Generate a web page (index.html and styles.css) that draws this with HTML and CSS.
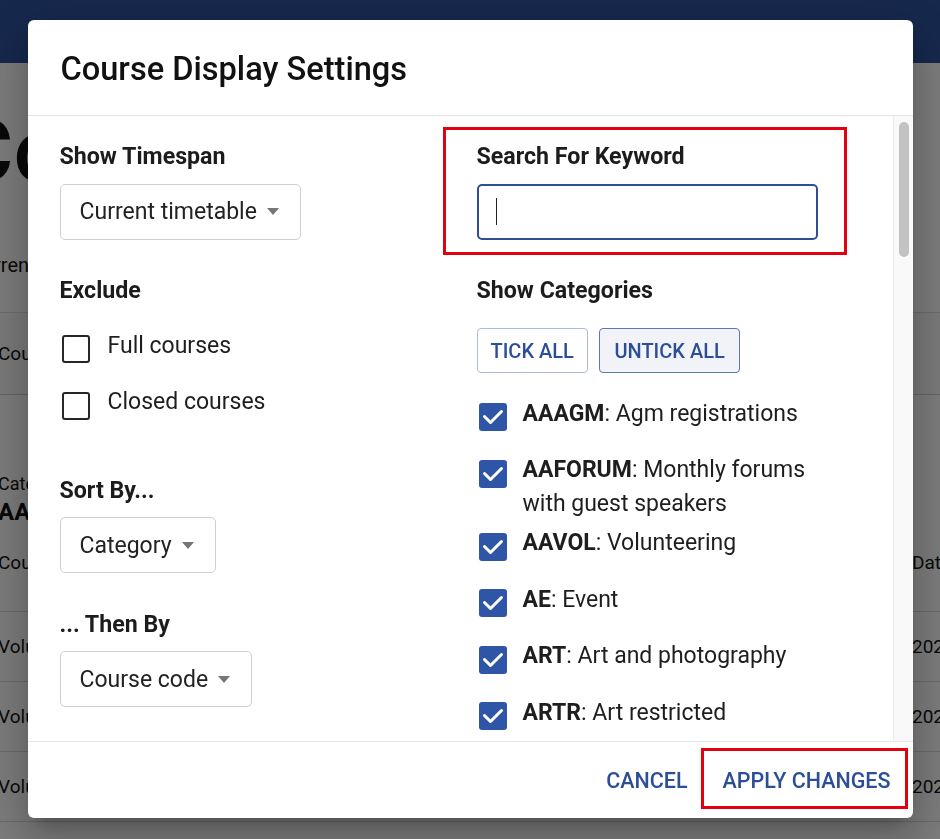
FILE: index.html
```html
<!DOCTYPE html>
<html lang="en">
<head>
<meta charset="utf-8">
<title>Course Display Settings</title>
<link rel="stylesheet" href="styles.css">
</head>
<body>
<div class="page">
  <header class="topbar"></header>
  <main class="content">
    <h1 class="page-title">Courses</h1>
    <p class="page-sub">Current timetable</p>
    <div class="toolbar"><span>Course display settings</span><span class="dots">⋮</span></div>
    <div class="group-label">Category</div>
    <div class="group-name">AAVOL</div>
    <div class="table">
      <div class="thead"><span>Course</span><span>Date</span></div>
      <div class="trow"><span>Volunteer induction</span><span>2024</span></div>
      <div class="trow"><span>Volunteer training</span><span>2024</span></div>
      <div class="trow"><span>Volunteer meeting</span><span>2024</span></div>
    </div>
  </main>
</div>

<div class="overlay">
  <div class="dialog" role="dialog" aria-labelledby="dlg-title">
    <div class="dialog-header">
      <h2 class="dialog-title" id="dlg-title">Course Display Settings</h2>
    </div>

    <div class="dialog-main">
      <div class="dialog-body">
        <div class="col">
          <section class="field">
            <h3 class="field-label">Show Timespan</h3>
            <div class="select"><span>Current timetable</span><span class="caret"></span></div>
          </section>

          <section class="field">
            <h3 class="field-label">Exclude</h3>
            <div class="check-list check-list-exclude">
              <label class="check-row"><span class="box box-empty"></span><span class="check-text check-text-plain">Full courses</span></label>
              <label class="check-row"><span class="box box-empty"></span><span class="check-text check-text-plain">Closed courses</span></label>
            </div>
          </section>

          <section class="field field-sort">
            <h3 class="field-label">Sort By...</h3>
            <div class="select"><span>Category</span><span class="caret"></span></div>
          </section>

          <section class="field field-then">
            <h3 class="field-label">... Then By</h3>
            <div class="select"><span>Course code</span><span class="caret"></span></div>
          </section>
        </div>

        <div class="col">
          <section class="field search-field">
            <h3 class="field-label">Search For Keyword</h3>
            <div class="text-input" role="textbox"><span class="text-caret"></span></div>
            <div class="highlight highlight-search"></div>
          </section>

          <section class="field">
            <h3 class="field-label">Show Categories</h3>
            <div class="btn-row">
              <button class="btn-outline">TICK ALL</button>
              <button class="btn-outline is-active">UNTICK ALL</button>
            </div>
            <div class="check-list check-list-cats">
              <label class="check-row"><span class="box box-checked"><svg viewBox="0 0 28 28"><path d="M5.5 13.5 L11.5 19.5 L22.5 8.5"/></svg></span><span class="check-text"><b>AAAGM</b>: Agm registrations</span></label>
              <label class="check-row"><span class="box box-checked"><svg viewBox="0 0 28 28"><path d="M5.5 13.5 L11.5 19.5 L22.5 8.5"/></svg></span><span class="check-text"><b>AAFORUM</b>: Monthly forums with guest speakers</span></label>
              <label class="check-row"><span class="box box-checked"><svg viewBox="0 0 28 28"><path d="M5.5 13.5 L11.5 19.5 L22.5 8.5"/></svg></span><span class="check-text"><b>AAVOL</b>: Volunteering</span></label>
              <label class="check-row"><span class="box box-checked"><svg viewBox="0 0 28 28"><path d="M5.5 13.5 L11.5 19.5 L22.5 8.5"/></svg></span><span class="check-text"><b>AE</b>: Event</span></label>
              <label class="check-row"><span class="box box-checked"><svg viewBox="0 0 28 28"><path d="M5.5 13.5 L11.5 19.5 L22.5 8.5"/></svg></span><span class="check-text"><b>ART</b>: Art and photography</span></label>
              <label class="check-row"><span class="box box-checked"><svg viewBox="0 0 28 28"><path d="M5.5 13.5 L11.5 19.5 L22.5 8.5"/></svg></span><span class="check-text"><b>ARTR</b>: Art restricted</span></label>
              <label class="check-row"><span class="box box-checked"><svg viewBox="0 0 28 28"><path d="M5.5 13.5 L11.5 19.5 L22.5 8.5"/></svg></span><span class="check-text"><b>BIRD</b>: Birdwatching</span></label>
              <label class="check-row"><span class="box box-checked"><svg viewBox="0 0 28 28"><path d="M5.5 13.5 L11.5 19.5 L22.5 8.5"/></svg></span><span class="check-text"><b>BOOK</b>: Book groups</span></label>
            </div>
          </section>
        </div>
      </div>
      <div class="scrollbar" aria-hidden="true"><div class="scroll-thumb"></div></div>
    </div>

    <div class="dialog-footer">
      <button class="btn-text">CANCEL</button>
      <button class="btn-text btn-apply">APPLY CHANGES<span class="highlight highlight-apply"></span></button>
    </div>
  </div>
</div>
</body>
</html>
```

FILE: styles.css
```css
* { box-sizing: border-box; }

html, body {
  margin: 0;
  height: 100%;
}

body {
  font-family: Roboto, "Noto Sans", "Liberation Sans", sans-serif;
  background: #f7f7f7;
  color: #111;
  overflow: hidden;
}

/* ---------- background page ---------- */
.topbar {
  height: 63px;
  background: #2d509b;
}

.content {
  margin-left: -2px;
  width: 1100px;
}

.page-title {
  margin: 43.5px 0 0 -42px;
  font-size: 88px;
  line-height: 88px;
  font-weight: 500;
}

.page-sub {
  margin: 58px 0 0 -28px;
  font-size: 20px;
  line-height: 24px;
}

.toolbar {
  margin-top: 35.5px;
  height: 83px;
  display: grid;
  grid-template-columns: 936px auto;
  align-items: center;
  border-top: 1px solid #d8d8d8;
  border-bottom: 1px solid #c6c6c6;
  background: #f2f2f2;
  font-size: 19px;
}

.dots { font-size: 22px; }

.group-label {
  margin-top: 77.5px;
  font-size: 18px;
  line-height: 22px;
}

.group-name {
  margin-top: 3.5px;
  font-size: 24px;
  line-height: 28px;
  font-weight: 700;
}

.thead,
.trow {
  display: grid;
  grid-template-columns: 914px 1fr;
  border-bottom: 1px solid #d2d2d2;
  font-size: 19px;
}

.thead {
  padding: 26px 0 37px;
  line-height: 22px;
}

.trow {
  height: 70px;
  align-items: center;
}

/* ---------- overlay + dialog ---------- */
.overlay {
  position: fixed;
  inset: 0;
  background: rgba(0, 0, 0, 0.5);
  display: flex;
  justify-content: center;
  align-items: flex-start;
  padding-top: 20px;
}

.dialog {
  width: 885px;
  height: 798px;
  background: #fff;
  border-radius: 6px;
  display: flex;
  flex-direction: column;
  overflow: hidden;
  box-shadow: 0 11px 15px -7px rgba(0,0,0,.2), 0 24px 38px 3px rgba(0,0,0,.14), 0 9px 46px 8px rgba(0,0,0,.12);
}

.dialog-header {
  flex: none;
  padding: 29px 31px 26px 33px;
  border-bottom: 1px solid #e3e3e3;
}

.dialog-title {
  margin: 0;
  font-size: 32.6px;
  line-height: 40px;
  font-weight: 500;
  color: #111;
}

.dialog-main {
  flex: 1;
  min-height: 0;
  display: flex;
}

.dialog-body {
  flex: 1;
  min-width: 0;
  overflow: hidden;
  display: grid;
  grid-template-columns: 417px 1fr;
  align-items: start;
  padding: 26px 0 24px 32px;
}

.scrollbar {
  flex: none;
  width: 20px;
  padding: 6px 4px 0 5px;
  background: #f9f9f9;
  border-left: 1px solid #ececec;
}

.scroll-thumb {
  height: 135px;
  border-radius: 5px;
  background: #c2c2c2;
}

.field + .field { margin-top: 36px; }
.field.field-sort { margin-top: 39px; }
.field.field-then { margin-top: 36.5px; }

.field-label {
  margin: 0;
  font-size: 23.2px;
  line-height: 28px;
  font-weight: 700;
  color: #1c1c1c;
}

.select {
  margin-top: 13.5px;
  width: max-content;
  height: 56px;
  display: flex;
  align-items: center;
  padding: 0 21px 0 19px;
  border: 1px solid #cfcfcf;
  border-radius: 5px;
  font-size: 23px;
  color: #222;
}

.caret {
  margin-left: 10px;
  width: 0;
  height: 0;
  border-left: 6.5px solid transparent;
  border-right: 6.5px solid transparent;
  border-top: 7px solid #767676;
}

/* checkboxes */
.check-list-exclude { margin-top: 25px; }
.check-list-cats { margin-top: 23.5px; }

.check-row {
  display: flex;
  align-items: flex-start;
  min-height: 51.5px;
  margin-bottom: 5px;
}

.box {
  flex: none;
  width: 28px;
  height: 28px;
  margin: 6.5px 16px 0 2px;
  border-radius: 3px;
}

.box-empty {
  border: 2.5px solid #262626;
}

.box-checked {
  background: #2f56a6;
}

.box-checked svg {
  display: block;
  width: 28px;
  height: 28px;
  fill: none;
  stroke: #fff;
  stroke-width: 3;
  stroke-linecap: round;
  stroke-linejoin: round;
}

.check-text {
  max-width: 310px;
  font-size: 23px;
  line-height: 34px;
  color: #1e1e1e;
}

.check-text-plain { padding-left: 2px; }

.check-text b { font-weight: 700; }

/* search */
.search-field { position: relative; }

.text-input {
  margin-top: 13.5px;
  width: 341px;
  height: 56px;
  display: flex;
  align-items: center;
  padding-left: 17px;
  border: 2px solid #2d4f98;
  border-radius: 5px;
}

.text-caret {
  width: 1.6px;
  height: 27px;
  background: #222;
}

.highlight {
  position: absolute;
  border: 3px solid #e3000f;
  pointer-events: none;
}

.highlight-search {
  top: -15px;
  left: -34px;
  width: 404px;
  height: 128px;
}

/* buttons */
.btn-row {
  margin-top: 24.5px;
  display: flex;
  gap: 11px;
}

.btn-outline {
  height: 45px;
  padding: 0 13px;
  border: 1.5px solid #aebcd9;
  border-radius: 4px;
  background: #fff;
  color: #2c4e97;
  font-family: inherit;
  font-size: 20px;
  font-weight: 500;
}

.btn-outline.is-active {
  padding: 0 14.5px;
  border-color: #5d77ad;
  background: #f1f3f8;
}

.dialog-footer {
  flex: none;
  height: 77px;
  display: flex;
  justify-content: flex-end;
  align-items: center;
  gap: 7px;
  padding: 0 8px;
  border-top: 1px solid #e6e6e6;
}

.btn-text {
  position: relative;
  height: 44px;
  padding: 0 14px;
  border: 0;
  background: none;
  color: #2c4e97;
  font-family: inherit;
  font-size: 21.5px;
  font-weight: 500;
}

.highlight-apply {
  top: -10px;
  left: -8px;
  width: 207px;
  height: 61px;
}
```
